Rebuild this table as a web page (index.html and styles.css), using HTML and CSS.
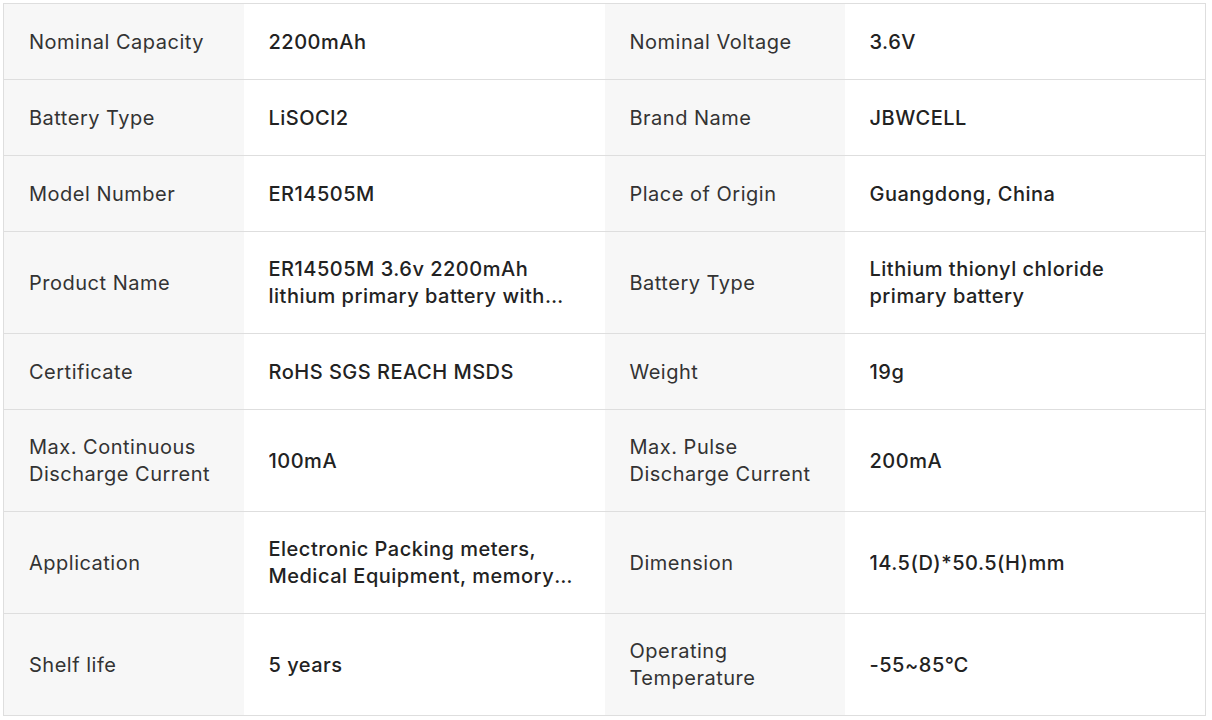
FILE: index.html
```html
<!DOCTYPE html>
<html>
<head>
<meta charset="utf-8">
<link rel="stylesheet" href="styles.css">
</head>
<body>
<div class="wrap">
<table class="specs">
<colgroup><col class="c-label"><col class="c-value"><col class="c-label"><col class="c-value"></colgroup>
<tr><td class="label"><div class="txt">Nominal Capacity</div></td><td class="value"><div class="txt">2200mAh</div></td><td class="label"><div class="txt">Nominal Voltage</div></td><td class="value"><div class="txt">3.6V</div></td></tr>
<tr><td class="label"><div class="txt">Battery Type</div></td><td class="value"><div class="txt">LiSOCl2</div></td><td class="label"><div class="txt">Brand Name</div></td><td class="value"><div class="txt">JBWCELL</div></td></tr>
<tr><td class="label"><div class="txt">Model Number</div></td><td class="value"><div class="txt">ER14505M</div></td><td class="label"><div class="txt">Place of Origin</div></td><td class="value"><div class="txt">Guangdong, China</div></td></tr>
<tr><td class="label"><div class="txt">Product Name</div></td><td class="value"><div class="txt">ER14505M 3.6v 2200mAh lithium primary battery with tabs for smart meter</div></td><td class="label"><div class="txt">Battery Type</div></td><td class="value"><div class="txt">Lithium thionyl chloride primary battery</div></td></tr>
<tr><td class="label"><div class="txt">Certificate</div></td><td class="value"><div class="txt">RoHS SGS REACH MSDS</div></td><td class="label"><div class="txt">Weight</div></td><td class="value"><div class="txt">19g</div></td></tr>
<tr><td class="label"><div class="txt">Max. Continuous Discharge Current</div></td><td class="value"><div class="txt">100mA</div></td><td class="label"><div class="txt">Max. Pulse Discharge Current</div></td><td class="value"><div class="txt">200mA</div></td></tr>
<tr><td class="label"><div class="txt">Application</div></td><td class="value"><div class="txt">Electronic Packing meters, Medical Equipment, memory backup, GPS tracker</div></td><td class="label"><div class="txt">Dimension</div></td><td class="value"><div class="txt">14.5(D)*50.5(H)mm</div></td></tr>
<tr><td class="label"><div class="txt">Shelf life</div></td><td class="value"><div class="txt">5 years</div></td><td class="label"><div class="txt">Operating Temperature</div></td><td class="value"><div class="txt">-55~85℃</div></td></tr>
</table>
</div>
</body>
</html>
```

FILE: styles.css
```css
html, body {
  margin: 0;
  padding: 0;
  background: #fff;
}
.wrap {
  padding: 3px 6px 0 3px;
}
.specs {
  width: 1203px;
  border-collapse: collapse;
  table-layout: fixed;
  font-family: Inter, "Liberation Sans", sans-serif;
  font-size: 20px;
  line-height: 27px;
  letter-spacing: 0.5px;
  border: 1px solid #dedede;
}
.c-label { width: 240px; }
.c-value { width: 361px; }
.specs td {
  border-top: 1px solid #dedede;
  border-bottom: 1px solid #dedede;
  padding: 24px 25px 23px;
  vertical-align: middle;
}
.label {
  background: #f7f7f7;
  color: #333;
  font-weight: 400;
}
.value {
  background: #fff;
  color: #222;
  font-weight: 500;
}
.txt {
  min-height: 28px;
  display: flex;
  align-items: center;
}
.value .txt {
  display: -webkit-box;
  -webkit-line-clamp: 2;
  -webkit-box-orient: vertical;
  overflow: hidden;
  min-height: 0;
}
```
